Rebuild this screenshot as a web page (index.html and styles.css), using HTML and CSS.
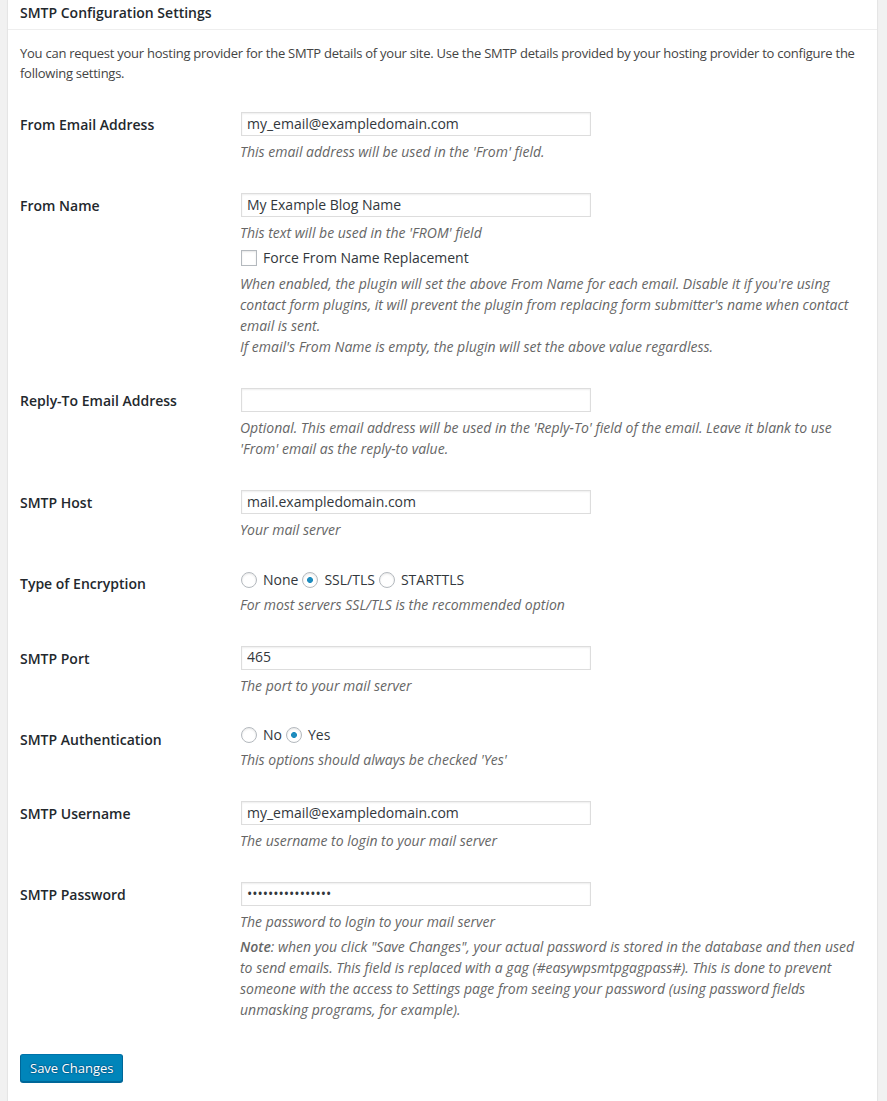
FILE: index.html
```html
<!DOCTYPE html>
<html lang="en">
<head>
    <meta charset="UTF-8">
    <meta name="viewport" content="width=device-width, initial-scale=1.0">
    <title>SMTP Configuration Settings</title>
    <link rel="stylesheet" href="styles.css">
</head>
<body>
    <div class="postbox">
        <h3 class="hndle">SMTP Configuration Settings</h3>
        <div class="inside">
            <p class="intro">You can request your hosting provider for the SMTP details of your site. Use the SMTP details provided by your hosting provider to configure the following settings.</p>

            <form id="smtpSettingsForm">
                <table class="form-table">
                    <tr>
                        <th>From Email Address</th>
                        <td>
                            <input type="text" class="field" name="from_email" value="my_email@exampledomain.com">
                            <p class="description">This email address will be used in the 'From' field.</p>
                        </td>
                    </tr>
                    <tr>
                        <th>From Name</th>
                        <td>
                            <input type="text" class="field" name="from_name" value="My Example Blog Name">
                            <p class="description">This text will be used in the 'FROM' field</p>
                            <label class="check-row">
                                <input type="checkbox" name="force_from_name">
                                Force From Name Replacement
                            </label>
                            <p class="description after-check">When enabled, the plugin will set the above From Name for each email. Disable it if you're using contact form plugins, it will prevent the plugin from replacing form submitter's name when contact email is sent.<br>If email's From Name is empty, the plugin will set the above value regardless.</p>
                        </td>
                    </tr>
                    <tr>
                        <th>Reply-To Email Address</th>
                        <td>
                            <input type="text" class="field" name="reply_to" value="">
                            <p class="description">Optional. This email address will be used in the 'Reply-To' field of the email. Leave it blank to use 'From' email as the reply-to value.</p>
                        </td>
                    </tr>
                    <tr>
                        <th>SMTP Host</th>
                        <td>
                            <input type="text" class="field" name="smtp_host" value="mail.exampledomain.com">
                            <p class="description">Your mail server</p>
                        </td>
                    </tr>
                    <tr>
                        <th>Type of Encryption</th>
                        <td>
                            <div class="choices">
                                <label class="choice"><input type="radio" name="encryption" value="none">None</label>
                                <label class="choice"><input type="radio" name="encryption" value="ssl" checked>SSL/TLS</label>
                                <label class="choice"><input type="radio" name="encryption" value="tls">STARTTLS</label>
                            </div>
                            <p class="description">For most servers SSL/TLS is the recommended option</p>
                        </td>
                    </tr>
                    <tr>
                        <th>SMTP Port</th>
                        <td>
                            <input type="text" class="field" name="smtp_port" value="465">
                            <p class="description">The port to your mail server</p>
                        </td>
                    </tr>
                    <tr>
                        <th>SMTP Authentication</th>
                        <td>
                            <div class="choices">
                                <label class="choice"><input type="radio" name="auth" value="no">No</label>
                                <label class="choice"><input type="radio" name="auth" value="yes" checked>Yes</label>
                            </div>
                            <p class="description">This options should always be checked 'Yes'</p>
                        </td>
                    </tr>
                    <tr>
                        <th>SMTP Username</th>
                        <td>
                            <input type="text" class="field" name="smtp_user" value="my_email@exampledomain.com">
                            <p class="description">The username to login to your mail server</p>
                        </td>
                    </tr>
                    <tr>
                        <th>SMTP Password</th>
                        <td>
                            <input type="password" class="field" name="smtp_pass" value="gagpassword12345">
                            <p class="description">The password to login to your mail server</p>
                            <p class="description note"><b>Note</b>: when you click "Save Changes", your actual password is stored in the database and then used to send emails. This field is replaced with a gag (#easywpsmtpgagpass#). This is done to prevent someone with the access to Settings page from seeing your password (using password fields unmasking programs, for example).</p>
                        </td>
                    </tr>
                </table>

                <p class="submit">
                    <button type="submit" class="button-primary">Save Changes</button>
                </p>
            </form>
        </div>
    </div>
</body>
</html>
```

FILE: styles.css
```css
body {
    margin: 0;
    background: #f1f1f1;
    color: #444;
    font-family: "Open Sans", sans-serif;
    font-size: 13px;
    line-height: 1.4;
}
.postbox {
    margin: 0 9px 0 7px;
    background: #fff;
    border: 1px solid #e5e5e5;
    border-top: none;
    box-shadow: 0 1px 1px rgba(0, 0, 0, .04);
}
.hndle {
    margin: 0;
    padding: 3px 12px 7px;
    font-size: 14px;
    line-height: 19px;
    font-weight: 600;
    color: #23282d;
    border-bottom: 1px solid #eee;
}
.inside {
    padding: 0 12px 24px;
}
.intro {
    margin: 13px 0;
    line-height: 20px;
    letter-spacing: -0.25px;
}
.form-table {
    width: 100%;
    border-collapse: collapse;
}
.form-table th {
    width: 200px;
    padding: 20px 10px 20px 0;
    text-align: left;
    vertical-align: top;
    font-size: 14px;
    font-weight: 600;
    line-height: 1.3;
    color: #23282d;
}
.form-table td {
    padding: 15px 10px;
    vertical-align: top;
    font-size: 14px;
    line-height: 1.3;
    color: #444;
}
.field {
    display: block;
    box-sizing: border-box;
    width: 350px;
    height: 24px;
    margin: 1px;
    padding: 1px 5px 3px;
    border: 1px solid #ddd;
    box-shadow: inset 0 1px 2px rgba(0, 0, 0, .07);
    background: #fff;
    color: #32373c;
    font-family: inherit;
    font-size: 14px;
    outline: none;
}
.description {
    margin: 4px 0 0;
    line-height: 21px;
    font-style: italic;
    color: #666;
}
.field + .description,
.description.after-check {
    margin-top: 5px;
}
.description b {
    font-weight: 600;
}
.check-row {
    display: flex;
    align-items: center;
    height: 20px;
    margin-top: 5px;
    color: #32373c;
}
.choices {
    display: flex;
    align-items: center;
    height: 19.5px;
    color: #32373c;
}
.choice {
    display: flex;
    align-items: center;
    margin-right: 3px;
}
input[type="checkbox"],
input[type="radio"] {
    -webkit-appearance: none;
    appearance: none;
    flex: none;
    width: 16px;
    height: 16px;
    margin: 0 6px 0 1px;
    border: 1px solid #b4b9be;
    background: #fff;
    box-shadow: inset 0 1px 2px rgba(0, 0, 0, .1);
}
input[type="radio"] {
    border-radius: 50%;
}
input[type="radio"]:checked {
    background: radial-gradient(circle, #1e8cbe 0, #1e8cbe 2.6px, #fff 3.3px);
}
.submit {
    margin: 19px 0 13px;
}
.button-primary {
    height: 28px;
    padding: 0 9px 1px;
    border: 1px solid;
    border-color: #0073aa #006799 #006799;
    border-radius: 3px;
    background: #0085ba;
    box-shadow: 0 1px 0 #006799;
    color: #fff;
    font-family: inherit;
    font-size: 13px;
    line-height: 26px;
    text-shadow: 0 -1px 1px #006799, 1px 0 1px #006799, 0 1px 1px #006799, -1px 0 1px #006799;
    cursor: pointer;
}
```
